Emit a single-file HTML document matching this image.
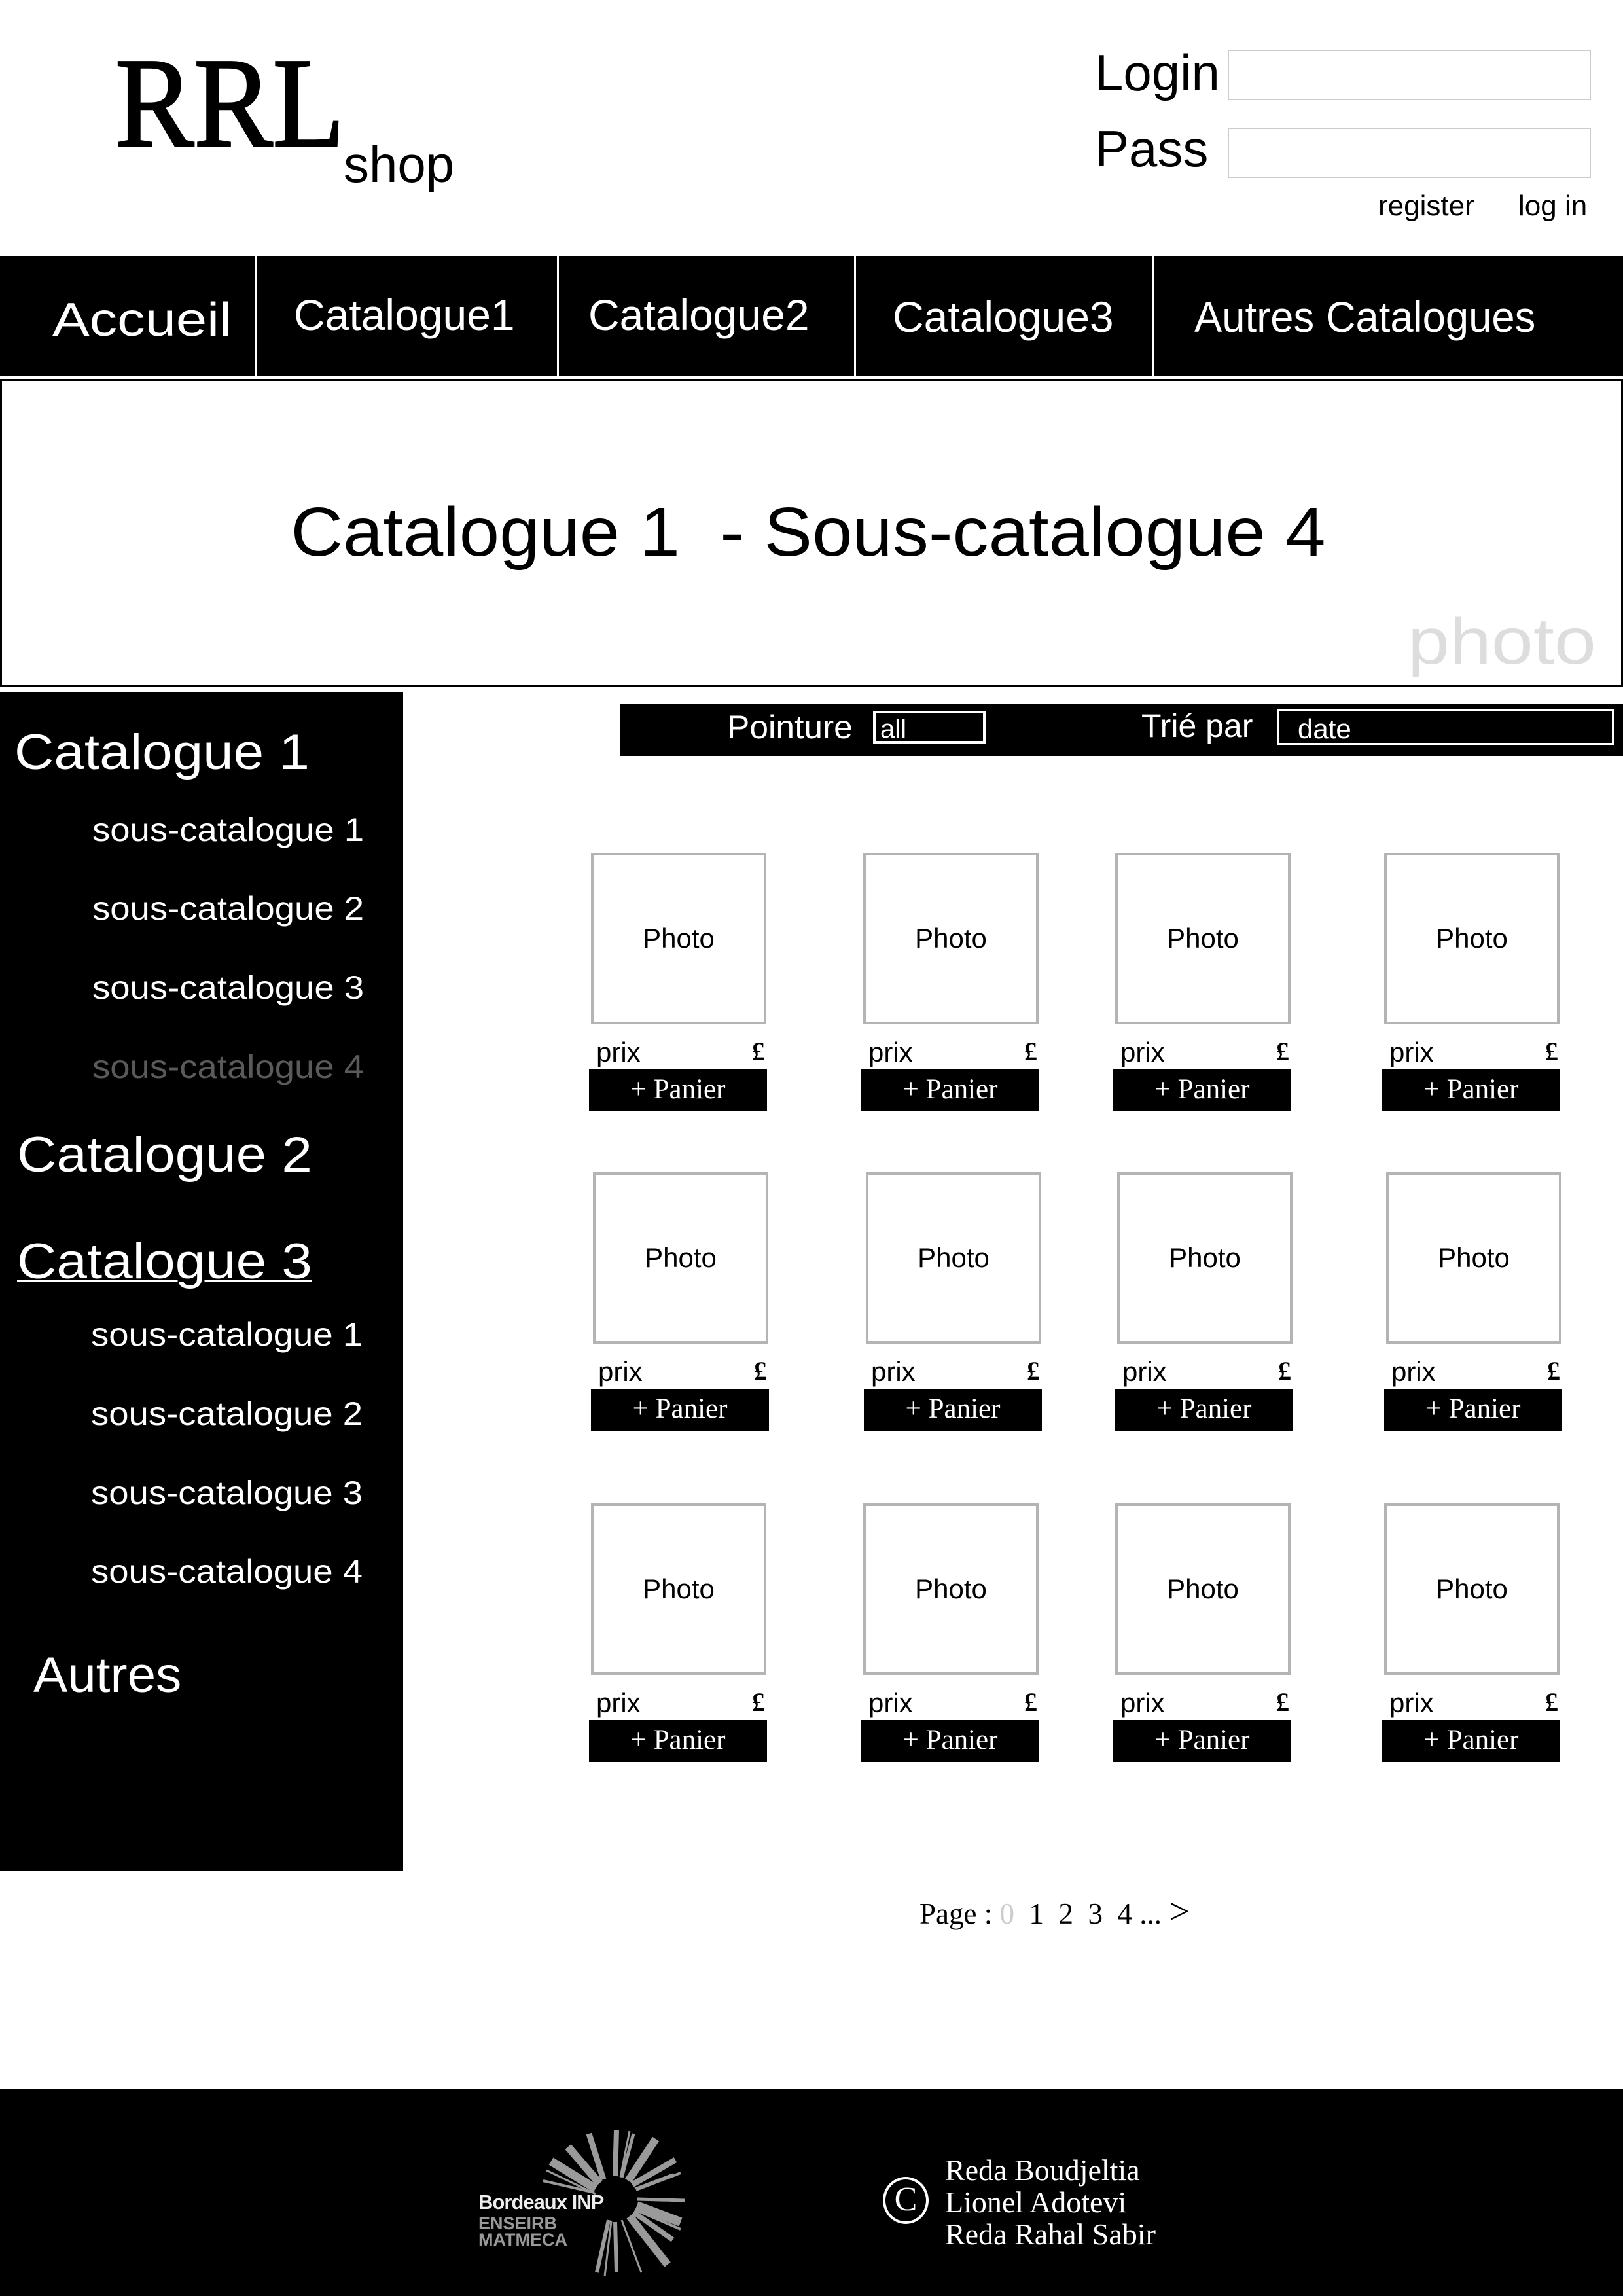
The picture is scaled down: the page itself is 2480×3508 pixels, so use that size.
<!DOCTYPE html>
<html><head><meta charset="utf-8"><style>
*{margin:0;padding:0;box-sizing:border-box}
body{width:2480px;height:3508px;position:relative;background:#fff;font-family:"Liberation Sans",sans-serif;overflow:hidden;color:#000}
.a{position:absolute;white-space:nowrap;line-height:1;transform-origin:left}
.nav{position:absolute;top:391px;height:184px;background:#000}
.sep{position:absolute;top:391px;height:184px;width:3px;background:#fff}
.sb{color:#fff}
.h{transform:scaleX(1.1)}
.s{transform:scaleX(1.09)}
.card{position:absolute;width:270px;height:400px}
.card .ph{position:absolute;left:0;top:0;width:268px;height:262px;border:4px solid #b4b4b4;text-align:center;line-height:254px;font-size:42px}
.card .px{position:absolute;left:8px;top:284px;font-size:42px;line-height:1}
.card .lb{position:absolute;right:4px;top:284px;font-size:40px;line-height:1;font-family:"Liberation Serif",serif;font-weight:bold}
.card .bt{position:absolute;left:-3px;top:331px;width:272px;height:64px;background:#000;color:#fff;font-family:"Liberation Serif",serif;font-size:43px;text-align:center;line-height:62px}
</style></head><body>
<div class="a" style="left:176px;top:60px;font-family:'Liberation Serif',serif;font-size:196px;transform:scaleX(0.92);-webkit-text-stroke:3px #000">RRL</div>
<div class="a" style="left:525px;top:212px;font-size:78px">shop</div>
<div class="a" style="left:1673px;top:72px;font-size:78px">Login</div>
<div class="a" style="left:1673px;top:188px;font-size:78px">Pass</div>
<div style="position:absolute;left:1876px;top:76px;width:555px;height:77px;border:2px solid #ccc"></div>
<div style="position:absolute;left:1876px;top:195px;width:555px;height:77px;border:2px solid #ccc"></div>
<div class="a" style="left:2106px;top:293px;font-size:44px">register</div>
<div class="a" style="left:2320px;top:293px;font-size:44px">log in</div>

<div class="nav" style="left:0;width:2480px"></div>
<div class="sep" style="left:389px"></div><div class="sep" style="left:851px"></div><div class="sep" style="left:1305px"></div><div class="sep" style="left:1761px"></div>
<div class="a sb" style="left:80px;top:453px;font-size:72px;transform:scaleX(1.18)">Accueil</div>
<div class="a sb" style="left:449px;top:448px;font-size:66px">Catalogue1</div>
<div class="a sb" style="left:899px;top:448px;font-size:66px">Catalogue2</div>
<div class="a sb" style="left:1364px;top:451px;font-size:66px">Catalogue3</div>
<div class="a sb" style="left:1825px;top:451px;font-size:66px;transform:scaleX(0.96)">Autres Catalogues</div>

<div style="position:absolute;left:0;top:579px;width:2480px;height:471px;border:3px solid #000"></div>
<div class="a" style="left:0;width:2470px;text-align:center;top:760px;font-size:106px;transform:scaleX(1.04);transform-origin:center">Catalogue 1&nbsp; - Sous-catalogue 4</div>
<div class="a" style="left:2151px;top:930px;font-size:100px;color:#ddd;transform:scaleX(1.15)">photo</div>

<div style="position:absolute;left:0;top:1058px;width:616px;height:1800px;background:#000"></div>
<div class="a sb h" style="left:22px;top:1112px;font-size:76px">Catalogue 1</div>
<div class="a sb s" style="left:141px;top:1243px;font-size:50px">sous-catalogue 1</div>
<div class="a sb s" style="left:141px;top:1363px;font-size:50px">sous-catalogue 2</div>
<div class="a sb s" style="left:141px;top:1484px;font-size:50px">sous-catalogue 3</div>
<div class="a s" style="left:141px;top:1605px;font-size:50px;color:#5a5a5a">sous-catalogue 4</div>
<div class="a sb h" style="left:26px;top:1727px;font-size:76px">Catalogue 2</div>
<div class="a sb h" style="left:26px;top:1890px;font-size:76px;text-decoration:underline;text-decoration-thickness:4px">Catalogue 3</div>
<div class="a sb s" style="left:139px;top:2014px;font-size:50px">sous-catalogue 1</div>
<div class="a sb s" style="left:139px;top:2135px;font-size:50px">sous-catalogue 2</div>
<div class="a sb s" style="left:139px;top:2256px;font-size:50px">sous-catalogue 3</div>
<div class="a sb s" style="left:139px;top:2376px;font-size:50px">sous-catalogue 4</div>
<div class="a sb" style="left:51px;top:2522px;font-size:76px;transform:scaleX(1.03)">Autres</div>

<div style="position:absolute;left:948px;top:1075px;width:1532px;height:80px;background:#000"></div>
<div class="a sb" style="left:1111px;top:1086px;font-size:50px;transform:scaleX(1.03)">Pointure</div>
<div style="position:absolute;left:1334px;top:1086px;width:172px;height:50px;border:4px solid #fff"></div>
<div class="a sb" style="left:1345px;top:1094px;font-size:40px">all</div>
<div class="a sb" style="left:1744px;top:1084px;font-size:50px">Trié par</div>
<div style="position:absolute;left:1951px;top:1083px;width:516px;height:56px;border:4px solid #fff"></div>
<div class="a sb" style="left:1983px;top:1093px;font-size:42px">date</div>

<div class="card" style="left:903px;top:1303px"><div class="ph">Photo</div><div class="px">prix</div><div class="lb">£</div><div class="bt">+ Panier</div></div>
<div class="card" style="left:1319px;top:1303px"><div class="ph">Photo</div><div class="px">prix</div><div class="lb">£</div><div class="bt">+ Panier</div></div>
<div class="card" style="left:1704px;top:1303px"><div class="ph">Photo</div><div class="px">prix</div><div class="lb">£</div><div class="bt">+ Panier</div></div>
<div class="card" style="left:2115px;top:1303px"><div class="ph">Photo</div><div class="px">prix</div><div class="lb">£</div><div class="bt">+ Panier</div></div>

<div class="card" style="left:906px;top:1791px"><div class="ph">Photo</div><div class="px">prix</div><div class="lb">£</div><div class="bt">+ Panier</div></div>
<div class="card" style="left:1323px;top:1791px"><div class="ph">Photo</div><div class="px">prix</div><div class="lb">£</div><div class="bt">+ Panier</div></div>
<div class="card" style="left:1707px;top:1791px"><div class="ph">Photo</div><div class="px">prix</div><div class="lb">£</div><div class="bt">+ Panier</div></div>
<div class="card" style="left:2118px;top:1791px"><div class="ph">Photo</div><div class="px">prix</div><div class="lb">£</div><div class="bt">+ Panier</div></div>

<div class="card" style="left:903px;top:2297px"><div class="ph">Photo</div><div class="px">prix</div><div class="lb">£</div><div class="bt">+ Panier</div></div>
<div class="card" style="left:1319px;top:2297px"><div class="ph">Photo</div><div class="px">prix</div><div class="lb">£</div><div class="bt">+ Panier</div></div>
<div class="card" style="left:1704px;top:2297px"><div class="ph">Photo</div><div class="px">prix</div><div class="lb">£</div><div class="bt">+ Panier</div></div>
<div class="card" style="left:2115px;top:2297px"><div class="ph">Photo</div><div class="px">prix</div><div class="lb">£</div><div class="bt">+ Panier</div></div>

<div class="a" style="left:1405px;top:2893px;font-family:'Liberation Serif',serif;font-size:45px">Page : <span style="color:#ccc">0</span>&nbsp; 1&nbsp; 2&nbsp; 3&nbsp; 4 ... <span style="font-size:56px">&gt;</span></div>

<div style="position:absolute;left:0;top:3192px;width:2480px;height:316px;background:#000"></div>
<svg style="position:absolute;left:820px;top:3240px" width="240" height="240" viewBox="-120 -120 240 240">
<g stroke="#9a9a9a" stroke-linecap="butt">
<line x1="0" y1="-35" x2="2" y2="-105" stroke-width="8"/>
<line x1="10" y1="-33" x2="28" y2="-100" stroke-width="5"/>
<line x1="20" y1="-28" x2="62" y2="-92" stroke-width="12"/>
<line x1="26" y1="-22" x2="92" y2="-60" stroke-width="9"/>
<line x1="32" y1="-14" x2="100" y2="-40" stroke-width="4"/>
<line x1="34" y1="0" x2="106" y2="2" stroke-width="5"/>
<line x1="33" y1="10" x2="100" y2="35" stroke-width="14"/>
<line x1="28" y1="20" x2="88" y2="62" stroke-width="8"/>
<line x1="22" y1="26" x2="80" y2="100" stroke-width="12"/>
<line x1="10" y1="32" x2="40" y2="112" stroke-width="3"/>
<line x1="0" y1="35" x2="2" y2="112" stroke-width="6"/>
<line x1="-10" y1="32" x2="-28" y2="112" stroke-width="6"/>
<line x1="-6" y1="34" x2="-16" y2="118" stroke-width="3"/>
<line x1="-18" y1="-30" x2="-40" y2="-100" stroke-width="9"/>
<line x1="-24" y1="-24" x2="-72" y2="-80" stroke-width="12"/>
<line x1="-30" y1="-16" x2="-98" y2="-58" stroke-width="13"/>
<line x1="-32" y1="-10" x2="-110" y2="-28" stroke-width="4"/>
<line x1="-30" y1="-8" x2="-105" y2="-44" stroke-width="3"/>
<line x1="8" y1="-34" x2="22" y2="-104" stroke-width="3"/>
<line x1="30" y1="-16" x2="88" y2="-38" stroke-width="3"/>
<line x1="30" y1="16" x2="100" y2="46" stroke-width="4"/>
</g></svg>
<div class="a" style="left:731px;top:3349px;font-size:31px;color:#eee;font-weight:bold;letter-spacing:-1px">Bordeaux INP</div>
<div class="a" style="left:731px;top:3384px;font-size:27px;color:#999;font-weight:bold">ENSEIRB</div>
<div class="a" style="left:731px;top:3409px;font-size:27px;color:#999;font-weight:bold">MATMECA</div>
<div style="position:absolute;left:1349px;top:3326px;width:70px;height:72px;border:4px solid #fff;border-radius:50%;color:#fff;font-family:'Liberation Serif',serif;font-size:52px;text-align:center;line-height:62px">C</div>
<div class="a sb" style="left:1444px;top:3293px;font-family:'Liberation Serif',serif;font-size:46px">Reda Boudjeltia</div>
<div class="a sb" style="left:1444px;top:3342px;font-family:'Liberation Serif',serif;font-size:46px">Lionel Adotevi</div>
<div class="a sb" style="left:1444px;top:3391px;font-family:'Liberation Serif',serif;font-size:46px">Reda Rahal Sabir</div>
</body></html>
